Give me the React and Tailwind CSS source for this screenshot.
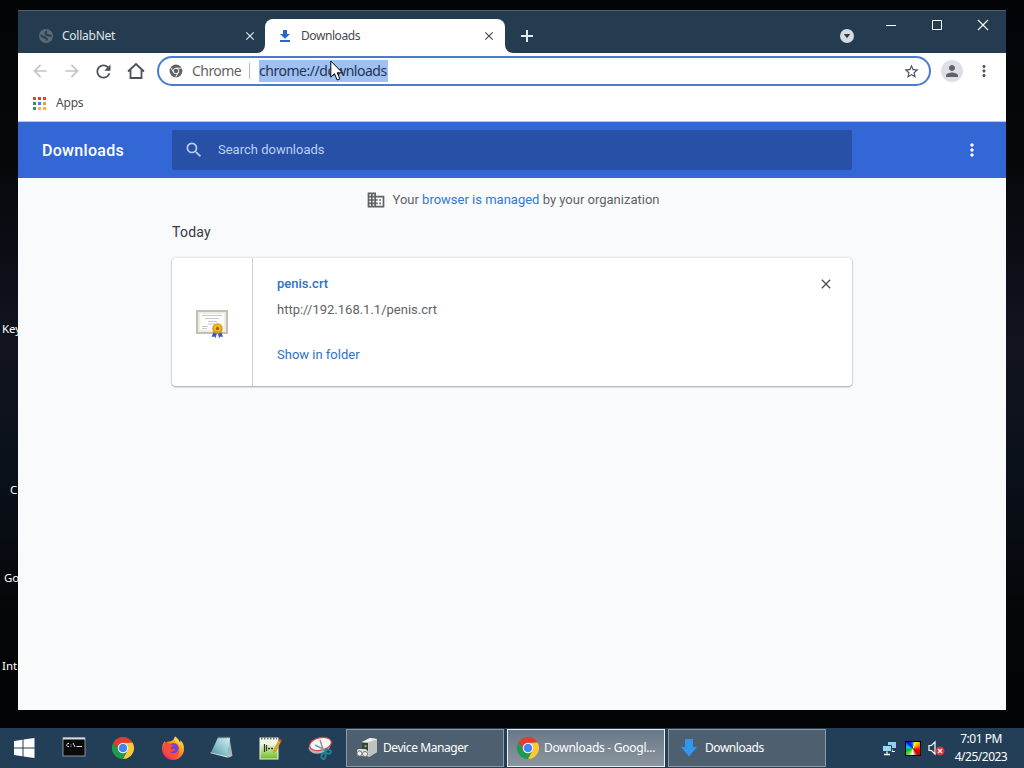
import React from 'react';
import {
  MdArrowBack,
  MdArrowForward,
  MdClose,
  MdDomain,
  MdMoreVert,
  MdPerson,
  MdRefresh,
  MdSearch,
  MdStarBorder,
} from 'react-icons/md';

const APP_DOTS = [
  'bg-[#d9453a]', 'bg-[#d9453a]', 'bg-[#d9453a]',
  'bg-[#2f9550]', 'bg-[#4380e8]', 'bg-[#e8a13a]',
  'bg-[#2f9550]', 'bg-[#e9c02c]', 'bg-[#e9c02c]',
];

function ChromeLogo({ size = 24 }) {
  return (
    <svg width={size} height={size} viewBox="0 0 48 48">
      <path d="M4.900 13A22 22 0 0 1 43.100 13L24 14a10 10 0 0 0-8.700 15z" fill="#e33b2e" />
      <path d="M43.100 13A22 22 0 0 1 24 46l8.700-17A10 10 0 0 0 24 14z" fill="#fcc934" />
      <path d="M4.900 13A22 22 0 0 0 24 46l8.700-17a10 10 0 0 1-17.400 0z" fill="#1e9b4c" />
      <circle cx="24" cy="24" r="10.500" fill="#fff" />
      <circle cx="24" cy="24" r="8.500" fill="#4285f4" />
    </svg>
  );
}

function ChromeMono() {
  return (
    <svg width="14" height="14" viewBox="0 0 48 48">
      <circle cx="24" cy="24" r="22" fill="#5f6368" />
      <circle cx="24" cy="24" r="9.500" fill="none" stroke="#fff" strokeWidth="3" />
      <path d="M24 14.500h20M15.800 28.700L6 12M32.200 28.700L22 46" stroke="#fff" strokeWidth="3" />
    </svg>
  );
}

function GlobeIcon() {
  return (
    <svg width="16" height="16" viewBox="0 0 16 16">
      <circle cx="8" cy="8" r="7" fill="#5b6a76" />
      <path
        d="M2.500 7.500c1.800.2 2.200 1.600 3.800 1.700 1.500.1 1.300 1.400 2.400 1.600v1.800M13.500 7.600c-1.600.6-2.600-.4-3.800-.4S8 6.200 7.400 5.800 7.800 4 8.900 3.200"
        fill="none"
        stroke="#253c50"
        strokeWidth="1.9"
      />
    </svg>
  );
}

function DownloadGlyph() {
  return (
    <svg width="12" height="14" viewBox="0 0 12 14" fill="#2a66c8">
      <path d="M4 1h4v4h3L6 9.800 1 5h3zM1 11h10v2H1z" />
    </svg>
  );
}

function TitleBar() {
  return (
    <div className="flex h-[42px] bg-[#253c50]">
      <div className="flex w-[247px] items-center pt-2 pl-5">
        <GlobeIcon />
        <span className="ml-2 flex-1 text-xs tracking-[-0.25px] text-[#dfe6ea]">CollabNet</span>
        <MdClose size={14} className="mr-2 text-[#e4e9ec]" />
      </div>
      <div className="relative mt-2 flex w-[240px] items-center rounded-t-lg bg-white pl-[14px]">
        <svg className="absolute bottom-0 -left-2" width="8" height="8"><path d="M8 0v8H0a8 8 0 0 0 8-8z" fill="#fff" /></svg>
        <svg className="absolute -right-2 bottom-0" width="8" height="8"><path d="M0 0v8h8a8 8 0 0 1-8-8z" fill="#fff" /></svg>
        <DownloadGlyph />
        <span className="ml-[10px] flex-1 text-xs tracking-[-0.42px] text-[#45494d]">Downloads</span>
        <MdClose size={14} className="mr-[9px] text-[#45494d]" />
      </div>
      <svg className="mt-[19px] ml-4" width="12" height="12" viewBox="0 0 12 12">
        <path d="M6 0v12M0 6h12" stroke="#e4e9ec" strokeWidth="2" />
      </svg>
      <div className="flex flex-1 justify-end">
        <svg className="mt-[18px] mr-[14px]" width="14" height="14" viewBox="0 0 14 14">
          <circle cx="7" cy="7" r="7" fill="#d5dade" />
          <path d="M3.800 5h6.400L7 9.300z" fill="#253c50" />
        </svg>
        <svg className="h-7 w-[138px]" viewBox="0 0 138 28" fill="none" stroke="#fff">
          <path d="M18 14.500h10" />
          <path d="M64.500 9.500h9v9h-9z" />
          <path d="M110 9l10 10M120 9l-10 10" strokeWidth="1.200" />
        </svg>
      </div>
    </div>
  );
}

function Toolbar() {
  return (
    <div className="flex h-9 items-center bg-white text-[#5f6368]">
      <MdArrowBack size={20} className="ml-3 text-[#c3c5c8]" />
      <MdArrowForward size={20} className="ml-3 text-[#c3c5c8]" />
      <MdRefresh size={21} className="ml-[11px] text-[#4d5154]" />
      <svg className="ml-[13px]" width="18" height="18" viewBox="0 0 18 18">
        <path d="M1 9.500L9 2l8 7.500M3.500 8v8h11V8" fill="none" stroke="#4d5154" strokeWidth="1.800" />
      </svg>
      <div className="ml-3 flex h-[30px] w-[774px] items-center rounded-full border-2 border-[#4a7bd0] pr-[9px] pl-[10px]">
        <ChromeMono />
        <span className="ml-[9px] w-[50px] text-sm tracking-[-0.55px]">Chrome</span>
        <span className="mr-[9px] ml-[7px] h-4 w-px bg-[#b4b7ba]" />
        <span className="flex h-[22px] w-[129px] items-center bg-[#9fc0f2] text-sm tracking-[-0.47px] text-[#24344f]">
          chrome://downloads
        </span>
        <span className="flex-1" />
        <MdStarBorder size={17} className="text-[#4d5154]" />
      </div>
      <div className="ml-[10px] flex size-[22px] items-center justify-center rounded-full bg-[#dcdfe5]">
        <MdPerson size={18} />
      </div>
      <MdMoreVert size={18} className="ml-3 text-[#4d5154]" />
    </div>
  );
}

function BookmarksBar() {
  return (
    <div className="flex h-8 items-center bg-white pb-1 pl-[15px]">
      <div className="grid grid-cols-3 gap-[2px]">
        {APP_DOTS.map((color, i) => (
          <span key={i} className={`size-[3px] ${color}`} />
        ))}
      </div>
      <span className="ml-[10px] text-xs tracking-[-0.2px] text-[#4b4f53]">Apps</span>
    </div>
  );
}

function CertificateIcon() {
  return (
    <svg width="32" height="32" viewBox="0 0 32 32">
      <rect x="1" y="3" width="30" height="22" fill="#fdfdfa" stroke="#c2beb4" strokeWidth="2" />
      <rect x="3" y="5" width="26" height="18" fill="none" stroke="#dedbd4" />
      <path d="M6 7.500h20M9 10.500h14M12 13.500h9M12 16h7M6 18.500h6M6 20.500h5" stroke="#b8bcc0" strokeWidth=".8" />
      <path d="M18 23l-2.500 6 2.500-.5 1.500 1.500 2-6zM25 23l2 6-2.300-.5L23 30l-1.500-6z" fill="#315fc4" />
      <circle cx="21.500" cy="20.500" r="5.200" fill="#d9940d" />
      <circle cx="21.500" cy="20" r="3.800" fill="#f5ba1f" />
      <circle cx="21.500" cy="20.500" r="1.700" fill="#9a6510" />
    </svg>
  );
}

function DownloadsPage() {
  return (
    <div className="flex flex-1 flex-col bg-[#f8fafc] font-['Roboto',sans-serif] text-[13px]">
      <div className="flex h-14 items-center bg-[#3367d6]">
        <h1 className="w-[154px] pt-[2px] pl-6 text-base font-medium tracking-[0.3px] text-white">Downloads</h1>
        <div className="flex h-10 w-[680px] items-center rounded-[2px] bg-[#2850a7] pl-3">
          <MdSearch size={20} className="text-[#b7d0f7]" />
          <span className="ml-[14px] text-[#b7d0f7]">Search downloads</span>
        </div>
        <MdMoreVert size={20} className="ml-[110px] text-white" />
      </div>
      <div className="flex h-11 items-center justify-center pl-px text-[#5f6368]">
        <MdDomain size={20} className="mr-[7px]" />
        <p>
          Your <span className="text-[#3578cf]">browser is managed</span> by your organization
        </p>
      </div>
      <div className="ml-[154px] w-[680px]">
        <h2 className="pt-px text-sm leading-[18px] tracking-[0.25px] text-[#35383c]">Today</h2>
        <div className="mt-[17px] flex h-32 rounded bg-white shadow-[0_1px_2px_rgba(60,64,67,0.4),0_0_2px_rgba(60,64,67,0.25)]">
          <div className="flex w-[81px] items-center justify-center border-r border-[#cfd1d4] pt-[3px]">
            <CertificateIcon />
          </div>
          <div className="flex flex-1 flex-col pt-4 pl-6 leading-5">
            <span className="font-medium text-[#3070c8]">penis.crt</span>
            <span className="mt-[6px] text-[#606368]">http://192.168.1.1/penis.crt</span>
            <span className="mt-[25px] text-[#3070c8]">Show in folder</span>
          </div>
          <MdClose size={16} className="mt-[18px] mr-[18px] text-[#4d5154]" />
        </div>
      </div>
    </div>
  );
}

function WindowsLogo() {
  return (
    <svg className="mr-[2px]" width="22" height="22" viewBox="0 0 22 22" fill="#fff">
      <path d="M1 4l8.500-1.300v7.800H1zM10.500 2.500L21.500 1v9.500h-11zM1 11.500h8.500v7.800L1 18zM10.500 11.500h11V21l-11-1.500z" />
    </svg>
  );
}

function TerminalIcon() {
  return (
    <svg width="24" height="22" viewBox="0 0 24 22">
      <rect x="1" y="1" width="22" height="18" fill="#0a0a0a" stroke="#8b9196" />
      <path d="M1 1.500h22" stroke="#d8dcde" strokeWidth="2" />
      <path d="M7 6.500c-3-.8-3 4 0 3M9 7.500v.8M9 9.300v.8M11 6l2 4M14.500 9.500H20" stroke="#ddd" fill="none" />
    </svg>
  );
}

function FirefoxIcon() {
  return (
    <svg width="24" height="24" viewBox="0 0 24 24">
      <defs>
        <linearGradient id="fox" x1=".9" y1=".1" x2=".2" y2=".9">
          <stop offset="0" stopColor="#ffe141" />
          <stop offset=".45" stopColor="#ff8a1f" />
          <stop offset="1" stopColor="#f0246a" />
        </linearGradient>
      </defs>
      <path d="M14 .5c3 1.800 4.200 4 4.600 6 .8-.7.900-1.500.8-2.300C22 6.500 23.200 9.500 23 13a11 11 0 0 1-22 0C1 9.500 2 7 4 4.800c0 1 .3 1.700.8 2.200C6 5.800 7.500 5.400 9 5.600 11.500 4.800 13.500 3.200 14 .5z" fill="url(#fox)" />
      <circle cx="12.500" cy="12.300" r="5.300" fill="#7542c9" />
      <path d="M3 8c3-2 5-1 6.200.2l3 1.100c-.4 1.500-2.200 1.400-2.500 2.600.7 1.800 3.300 1.700 5 .7-1 3.500-6 4.500-8.800 1.200C7 18 15 20 18 14c.8 5-4 8-8 7C5 20 1.500 15 3 8z" fill="#f94e36" />
      <path d="M14 .5c4 3 5.500 6 5 10-1-3-3-4.500-5-6-.8-1.300-.6-2.600 0-4z" fill="#ffd83c" />
    </svg>
  );
}

function NotepadIcon() {
  return (
    <svg width="24" height="24" viewBox="0 0 24 24">
      <defs>
        <linearGradient id="pad" x1="1" y1="0" x2="0" y2="1">
          <stop offset="0" stopColor="#d3eef2" />
          <stop offset=".5" stopColor="#8fc8d2" />
          <stop offset="1" stopColor="#508b9a" />
        </linearGradient>
      </defs>
      <path d="M19.500 2L22.500 20l-5 2z" fill="#a8babd" />
      <path d="M0 17l17 4.500 1.500-2.500L3 15z" fill="#d8e8e9" />
      <path d="M8 1.500h12.200L17.500 20.500 1 16.500z" fill="url(#pad)" />
      <path d="M8 1.500h12" stroke="#5c7378" strokeWidth="1.500" strokeDasharray="1.500 1" />
    </svg>
  );
}

function EditorIcon() {
  return (
    <svg width="24" height="24" viewBox="0 0 24 24">
      <defs>
        <linearGradient id="sheet" x1="0" y1="0" x2="0" y2="1">
          <stop offset=".25" stopColor="#f4f8e8" />
          <stop offset="1" stopColor="#6cbd1c" />
        </linearGradient>
      </defs>
      <rect x="1" y="2" width="18" height="21" fill="url(#sheet)" stroke="#eff3e8" />
      <path d="M2 2.500h16" stroke="#687358" strokeDasharray="1.500 1.500" strokeWidth="2" />
      <path d="M5.500 8v8M7.500 9v6" stroke="#333" strokeWidth="1.200" />
      <path d="M9 12.500h2M12 12.500h2" stroke="#333" strokeWidth="1.500" />
      <path d="M20.500 3l2 1.500L17 15l-2.500 1.500.3-2.800z" fill="#eda923" stroke="#a87218" strokeWidth=".5" />
      <path d="M19.600 4.500l2 1.400 1-1.500-2-1.500z" fill="#d84938" />
    </svg>
  );
}

function SnippingIcon() {
  return (
    <svg width="24" height="24" viewBox="0 0 24 24">
      <ellipse cx="11.500" cy="10.500" rx="11" ry="7" transform="rotate(-12 11.500 10.500)" fill="#b9b3ba" />
      <ellipse cx="12.500" cy="8" rx="11" ry="6.300" transform="rotate(-12 12.500 8)" fill="#f5f6f7" stroke="#d64444" strokeWidth="1.200" />
      <path d="M12 4l3.500 11M7 9l10 5" stroke="#8a979e" strokeWidth="1.500" />
      <g fill="none" stroke="#238097" strokeWidth="2">
        <ellipse cx="20" cy="15.500" rx="3" ry="2" transform="rotate(20 20 15.500)" />
        <ellipse cx="15.500" cy="20" rx="2" ry="3" transform="rotate(15 15.500 20)" />
      </g>
    </svg>
  );
}

function DeviceIcon() {
  return (
    <svg width="22" height="22" viewBox="0 0 22 22">
      <path d="M6 5l8-4 7 1v13l-8 5-7-3z" fill="#c9ccca" />
      <path d="M13 5l8-3v13l-8 5z" fill="#bfc2bf" />
      <path d="M6 5l8-4 7 1-8 3z" fill="#eff0ed" />
      <path d="M6 5.500l6 .5v8L6 12z" fill="#34423e" />
      <path d="M8.500 8l2 .3v2l-2-.3z" fill="#97b26c" />
      <rect x="1" y="12" width="10" height="7" rx="2" fill="#dddeda" />
      <circle cx="3.500" cy="16.500" r="2.500" fill="#eee" stroke="#777b78" />
      <circle cx="9" cy="17" r="2.500" fill="#eee" stroke="#777b78" />
    </svg>
  );
}

function BlueArrow() {
  return (
    <svg width="16" height="18" viewBox="0 0 16 18">
      <path d="M4 0h8v8h4l-8 9.500L0 8h4z" fill="#3497ef" />
    </svg>
  );
}

function TaskButton({ icon, label, active = false, className = '' }) {
  return (
    <div
      className={`flex h-[38px] w-[158px] shrink-0 items-center border ${
        active
          ? 'border-[#eef1f3] bg-gradient-to-t from-[#8b959e] to-[#69798a]'
          : 'border-[#8b9aa5] bg-[#4e6070]'
      }`}
    >
      {icon}
      <span className={`whitespace-nowrap text-xs text-white ${className}`}>{label}</span>
    </div>
  );
}

function TrayIcons() {
  return (
    <div className="flex items-center">
      <svg width="15" height="15" viewBox="0 0 15 15">
        <path d="M6 1h8v6H6z" fill="#8fd0ef" />
        <path d="M10 8v2M9 10.500h4" stroke="#fff" />
        <path d="M.5 4.500h9v6h-9z" fill="#9bd8f4" stroke="#24445e" />
        <path d="M5 10.500v2M2 13.500h6" stroke="#fff" strokeWidth="1.300" />
      </svg>
      <div className="ml-2 h-[15px] w-4 border border-black bg-[conic-gradient(from_20deg,#ff0,#f80,#f00,#b00,#fff_45%,#7d4,#0b3,#0cf_75%,#00f,#06f,#ff0)]" />
      <svg className="ml-[7px]" width="17" height="16" viewBox="0 0 17 16">
        <path d="M1 5.500h2.500L7 2v12l-3.500-3.500H1z" fill="none" stroke="#fff" strokeWidth="1.200" />
        <circle cx="12" cy="11" r="4.500" fill="#d9333f" />
        <path d="M10 9l4 4M14 9l-4 4" stroke="#fff" strokeWidth="1.200" />
      </svg>
    </div>
  );
}

function Taskbar() {
  const pinned = [WindowsLogo, TerminalIcon, ChromeLogo, FirefoxIcon, NotepadIcon, EditorIcon, SnippingIcon];
  return (
    <div className="flex h-10 items-center bg-[#233f58]">
      <div className="flex w-[346px] items-center">
        {pinned.map((Icon, i) => (
          <div key={i} className="flex w-[49.3px] shrink-0 items-center justify-center">
            <Icon />
          </div>
        ))}
      </div>
      <div className="flex gap-[3px]">
        <TaskButton icon={<span className="ml-[9px]"><DeviceIcon /></span>} label="Device Manager" className="ml-[5px] tracking-[-0.42px]" />
        <TaskButton active icon={<span className="ml-2"><ChromeLogo /></span>} label="Downloads - Googl..." className="ml-1 tracking-[-0.26px]" />
        <TaskButton icon={<span className="ml-3"><BlueArrow /></span>} label="Downloads" className="ml-2 tracking-[-0.45px]" />
      </div>
      <div className="ml-14">
        <TrayIcons />
      </div>
      <div className="flex flex-1 flex-col items-center pr-[7px] text-xs leading-[18px] tracking-[-0.5px] text-white">
        <span>7:01 PM</span>
        <span>4/25/2023</span>
      </div>
    </div>
  );
}

// Only the left edge of the desktop icons shows beside the window.
function DesktopLabels() {
  return (
    <div className="absolute inset-y-0 left-0 w-[18px] overflow-hidden text-[11.5px] leading-4 whitespace-nowrap text-white">
      <span className="absolute top-[321px] left-[2px]">Key</span>
      <span className="absolute top-[482px] left-[10px]">C</span>
      <span className="absolute top-[570px] left-1">Go</span>
      <span className="absolute top-[658px] left-[2px]">Int</span>
    </div>
  );
}

export default function App() {
  return (
    <div className="relative flex h-[768px] w-[1024px] flex-col justify-end overflow-hidden bg-[linear-gradient(#030406_0%,#05070a_20%,#11141f_45%,#0b111b_60%,#030507_82%,#020406_100%)] font-['Noto_Sans','Open_Sans',sans-serif]">
      <DesktopLabels />
      <div className="absolute top-[10px] left-[18px] flex h-[700px] w-[988px] flex-col border-t border-[#50606c] bg-white">
        <TitleBar />
        <Toolbar />
        <BookmarksBar />
        <div className="h-px shrink-0 border-b border-[#b7c8e4] bg-white" />
        <DownloadsPage />
      </div>
      <Taskbar />
      <svg className="absolute top-[60px] left-[330px]" width="14" height="22" viewBox="0 0 14 22">
        <path d="M.8 1v16.200l3.700-3.500 2.700 6.300 2.700-1.200-2.700-6h5.200z" fill="#fff" stroke="#000" />
      </svg>
    </div>
  );
}
